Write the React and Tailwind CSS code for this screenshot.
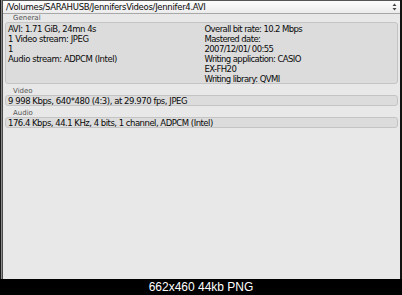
import React from "react";

const general = {
  left: ["AVI: 1.71 GiB, 24mn 4s", "1 Video stream: JPEG", "1", "Audio stream: ADPCM (Intel)"],
  right: [
    "Overall bit rate: 10.2 Mbps",
    "Mastered date:",
    "2007/12/01/ 00:55",
    "Writing application: CASIO",
    "EX-FH20",
    "Writing library: QVMI",
  ],
};

const Section = ({ title, children }) => (
  <div className="flex flex-col">
    <div className="h-[8px] pl-[9px] text-[7px] leading-[8px] text-[#555]">{title}</div>
    {children}
  </div>
);

const Box = ({ className = "", children }) => (
  <div
    className={`mx-[1px] rounded-[3px] border border-[#c4c4c4] bg-[#dcdcdc] px-[2px] ${className}`}
  >
    {children}
  </div>
);

export default function App() {
  return (
    <div
      className="flex h-[295px] w-[402px] flex-col bg-black text-[#0a0a0a]"
      style={{ fontFamily: '"DejaVu Sans", sans-serif' }}
    >
      {/* window */}
      <div className="flex h-[279px] flex-col border-l border-r-2 border-l-[#1a1a1a] border-r-[#111] bg-[#e8e8e8] shadow-[inset_1px_0_#8a8a8a,inset_2px_0_#4a4a4a]">
        {/* path popup */}
        <div className="ml-[2px] flex h-[14px] items-center justify-between border-b border-t border-b-[#a8a8a8] border-t-[#555] bg-gradient-to-b from-[#fdfdfd] to-[#ececec] pl-[3px] pr-[3px]">
          <span className="text-[8.5px] leading-[10px] tracking-[-0.3px]">
            /Volumes/SARAHUSB/JennifersVideos/Jennifer4.AVI
          </span>
          <svg width="5" height="8" viewBox="0 0 5 8">
            <path d="M0.5 3 L2.5 0.5 L4.5 3 Z M0.5 5 L2.5 7.5 L4.5 5 Z" fill="#444" />
          </svg>
        </div>

        <div className="flex flex-col gap-[3px] pl-[3px] pr-[1px]">
          <Section title="General">
            <Box className="h-[62px] pt-[1px]">
              <div className="grid grid-cols-2 text-[8.5px] leading-[10px] tracking-[-0.45px]">
                <div className="flex flex-col">
                  {general.left.map((t, i) => (
                    <div key={i}>{t}</div>
                  ))}
                </div>
                <div className="flex flex-col pl-[3px] tracking-[-0.6px]">
                  {general.right.map((t, i) => (
                    <div key={i}>{t}</div>
                  ))}
                </div>
              </div>
            </Box>
          </Section>

          <Section title="Video">
            <Box className="h-[11px] text-[8.5px] leading-[10px] tracking-[-0.45px]">
              9 998 Kbps, 640*480 (4:3), at 29.970 fps, JPEG
            </Box>
          </Section>

          <Section title="Audio">
            <Box className="h-[11px] text-[8.5px] leading-[10px] tracking-[-0.5px]">
              176.4 Kbps, 44.1 KHz, 4 bits, 1 channel, ADPCM (Intel)
            </Box>
          </Section>
        </div>
      </div>

      {/* caption */}
      <div
        className="flex h-[16px] items-center justify-center text-[12px] leading-[16px] text-white"
        style={{ fontFamily: '"Liberation Sans", sans-serif' }}
      >
        662x460 44kb PNG
      </div>
    </div>
  );
}
